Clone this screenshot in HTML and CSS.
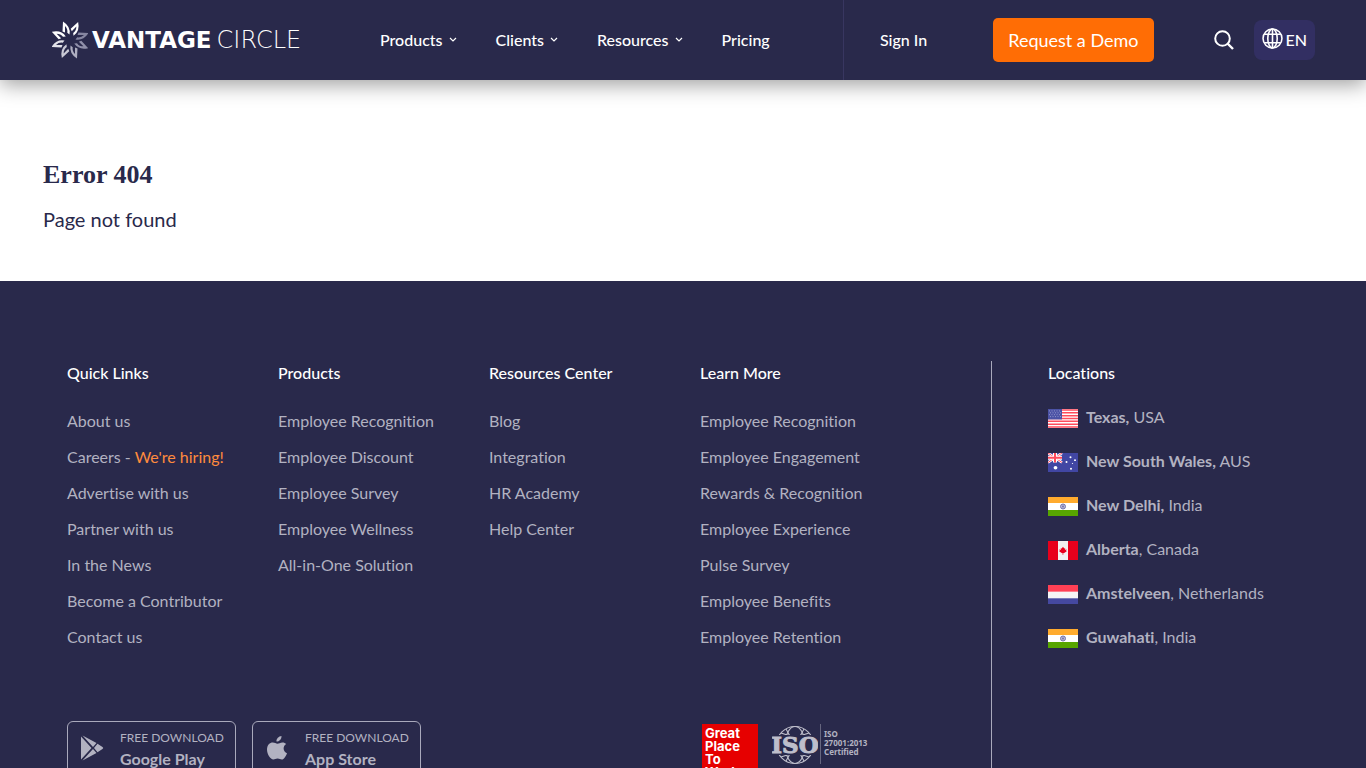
FILE: index.html
```html
<!DOCTYPE html>
<html lang="en">
<head>
<meta charset="utf-8">
<meta name="viewport" content="width=device-width, initial-scale=1">
<title>Error 404 | Vantage Circle</title>
<link rel="stylesheet" href="styles.css">
</head>
<body>
<svg class="sprites" aria-hidden="true">
  <symbol id="chevron" viewBox="0 0 8 6"><path d="M1 1l3 3 3-3" fill="none" stroke="currentColor" stroke-width="1.200"/></symbol>
  <symbol id="india" viewBox="0 0 30 19" preserveAspectRatio="none"><path fill="#fff" d="M0 0h30v19H0z"/><path fill="#ffab2e" d="M0 0h30v6H0z"/><path fill="#57a500" d="M0 13h30v6H0z"/><circle cx="15" cy="9.500" r="2.500" fill="#b9b9d8" stroke="#7474ad"/><circle cx="15" cy="9.500" r="1" fill="#7474ad"/></symbol>
</svg>
<header class="header">
  <a class="logo" href="#" aria-label="Vantage Circle">
    <svg class="logo-mark" viewBox="0 0 36 38">
      <defs>
        <path id="petal" d="M-7.500 -8.500L-7 -18.500Q1 -13.500 -.5 -5.500L-2.700 -7.200Q-2 -11 -5 -14L-5 -7.500Z"/>
      </defs>
      <g transform="translate(18 19)">
        <use href="#petal" fill="#fff"/>
        <use href="#petal" fill="#fff" transform="rotate(45)"/>
        <use href="#petal" fill="#8585a0" transform="rotate(90)"/>
        <use href="#petal" fill="#9090aa" transform="rotate(135)"/>
        <use href="#petal" fill="#aeaec0" transform="rotate(180)"/>
        <use href="#petal" fill="#c9c9d5" transform="rotate(225)"/>
        <use href="#petal" fill="#e2e2e9" transform="rotate(270)"/>
        <use href="#petal" fill="#fff" transform="rotate(315)"/>
      </g>
    </svg>
    <span class="logo-bold">VANTAGE</span><span class="logo-light">CIRCLE</span>
  </a>
  <nav class="nav">
    <a href="#">Products<svg class="chevron"><use href="#chevron"/></svg></a>
    <a href="#">Clients<svg class="chevron"><use href="#chevron"/></svg></a>
    <a href="#">Resources<svg class="chevron"><use href="#chevron"/></svg></a>
    <a href="#">Pricing</a>
  </nav>
  <div class="actions">
    <a class="sign-in" href="#">Sign In</a>
    <a class="demo" href="#">Request a Demo</a>
    <button class="search" type="button" aria-label="Search"><svg viewBox="0 0 20 20"><circle cx="8.500" cy="8.500" r="7.300" fill="none" stroke="currentColor" stroke-width="2"/><path d="M13.500 13.500l5.500 5.500" stroke="currentColor" stroke-width="2.400"/></svg></button>
    <button class="language" type="button"><svg viewBox="0 0 20 20" fill="none" stroke="currentColor" stroke-width="1.500"><circle cx="10" cy="10" r="9"/><ellipse cx="10" cy="10" rx="4.500" ry="9"/><path d="M10 1v18M2 6h16M2 14h16"/></svg>EN</button>
  </div>
</header>
<main class="main">
  <h1>Error 404</h1>
  <p>Page not found</p>
</main>
<footer class="footer">
  <div class="directory">
    <div class="columns">
      <section><h2>Quick Links</h2><ul>
        <li><a href="#">About us</a></li>
        <li><a href="#">Careers - <span class="hiring">We're hiring!</span></a></li>
        <li><a href="#">Advertise with us</a></li>
        <li><a href="#">Partner with us</a></li>
        <li><a href="#">In the News</a></li>
        <li><a href="#">Become a Contributor</a></li>
        <li><a href="#">Contact us</a></li>
      </ul></section>
      <section><h2>Products</h2><ul>
        <li><a href="#">Employee Recognition</a></li>
        <li><a href="#">Employee Discount</a></li>
        <li><a href="#">Employee Survey</a></li>
        <li><a href="#">Employee Wellness</a></li>
        <li><a href="#">All-in-One Solution</a></li>
      </ul></section>
      <section><h2>Resources Center</h2><ul>
        <li><a href="#">Blog</a></li>
        <li><a href="#">Integration</a></li>
        <li><a href="#">HR Academy</a></li>
        <li><a href="#">Help Center</a></li>
      </ul></section>
      <section><h2>Learn More</h2><ul>
        <li><a href="#">Employee Recognition</a></li>
        <li><a href="#">Employee Engagement</a></li>
        <li><a href="#">Rewards &amp; Recognition</a></li>
        <li><a href="#">Employee Experience</a></li>
        <li><a href="#">Pulse Survey</a></li>
        <li><a href="#">Employee Benefits</a></li>
        <li><a href="#">Employee Retention</a></li>
      </ul></section>
    </div>
    <div class="badges">
      <div class="stores">
        <a class="store" href="#">
          <svg viewBox="0 0 24 26" fill="currentColor"><path d="M1 1.500v23L11.500 13zM2.500 .5L16.500 8l-3.500 4zM2.500 25.500L16.500 18 13 14zM17.500 8.800l5 3.200q1.500 1 0 2l-5 3.200L14 13z"/></svg>
          <span class="store-text"><small>FREE DOWNLOAD</small><b>Google Play</b></span>
        </a>
        <a class="store" href="#">
          <svg viewBox="0 0 24 26" fill="currentColor"><path d="M16.500 1c.2 3-2 5.600-5 5.600C11.200 3.800 13.700 1.300 16.500 1zM21.200 9c-4 2.600-3 7.700.8 9.200-.8 2.400-3 6.300-5.200 6.300-1.600 0-2.200-1-4.200-1s-2.700 1-4.200 1C5.300 24.500 2 19 2 14.500 2 10 4.800 7.500 7.800 7.500c1.900 0 3.300 1.200 4.700 1.200 1.300 0 2.700-1.300 5-1.300 1.500 0 2.900.7 3.700 1.600z"/></svg>
          <span class="store-text"><small>FREE DOWNLOAD</small><b>App Store</b></span>
        </a>
      </div>
      <div class="certificates">
        <div class="great-place">Great<br>Place<br>To<br>Work.</div>
        <div class="iso">
          <svg viewBox="0 0 46 42" role="img" aria-label="ISO">
            <g fill="none" stroke="#bebecb" stroke-width="1.100"><circle cx="23" cy="21" r="18.500"/><ellipse cx="23" cy="21" rx="10" ry="18.500"/><path d="M9 9q14 6 28 0M9 33q14-6 28 0M14 5l18 32M32 5L14 37"/></g>
            <path d="M0 11h46v20H0z" fill="#29294b"/>
            <text x="23" y="29" text-anchor="middle" class="iso-name">ISO</text>
          </svg>
          <div class="iso-text">ISO<br>27001:2013<br>Certified</div>
        </div>
      </div>
    </div>
  </div>
  <section class="locations">
    <h2>Locations</h2>
    <ul>
      <li><svg class="flag" viewBox="0 0 30 20" preserveAspectRatio="none"><path fill="#fff" d="M0 0h30v20H0z"/><path stroke="#ff4b5c" stroke-width="1.600" d="M0 1h30M0 4h30M0 7h30M0 10h30M0 13h30M0 16h30M0 19h30"/><path fill="#4b52a5" d="M0 0h14v11H0z"/><path stroke="#8f95cb" stroke-dasharray="1 1.500" d="M1 2h12M2 4h11M1 6h12M2 8h11"/></svg><span><b>Texas,</b> USA</span></li>
      <li><svg class="flag" viewBox="0 0 30 20" preserveAspectRatio="none"><path fill="#4146a3" d="M0 0h30v20H0z"/><path stroke="#fff" stroke-width="2.500" d="M0 0l14 10M14 0L0 10"/><path stroke="#ff4b5c" d="M0 0l14 10M14 0L0 10"/><path stroke="#fff" stroke-width="4" d="M7 0v10M0 5h14"/><path stroke="#ff4b5c" stroke-width="2" d="M7 0v10M0 5h14"/><g fill="#fff"><circle cx="7.500" cy="15.500" r="1.900"/><circle cx="22.500" cy="4.500" r="1"/><circle cx="18.500" cy="9.500" r="1"/><circle cx="27" cy="7.500" r="1"/><circle cx="23" cy="16.500" r="1"/><circle cx="24.500" cy="11" r=".6"/></g></svg><span><b>New South Wales,</b> AUS</span></li>
      <li><svg class="flag"><use href="#india"/></svg><span><b>New Delhi,</b> India</span></li>
      <li><svg class="flag" viewBox="0 0 30 20" preserveAspectRatio="none"><path fill="#f1f1f1" d="M0 0h30v20H0z"/><path fill="#e8001c" d="M0 0h10v20H0zM20 0h10v20H20zM15 6l1.200 2 1-.3-.3 1.800 1.600-.8-.3 1.600.6.400-2.600 2-1 .1v2h-.5v-2l-1-.1-2.600-2 .6-.4-.3-1.600 1.600.8-.3-1.800 1 .3z"/></svg><span><b>Alberta</b>, Canada</span></li>
      <li><svg class="flag" viewBox="0 0 30 20" preserveAspectRatio="none"><path fill="#f5f5f5" d="M0 0h30v20H0z"/><path fill="#ff4055" d="M0 0h30v7H0z"/><path fill="#4548a0" d="M0 14h30v6H0z"/></svg><span><b>Amstelveen</b>, Netherlands</span></li>
      <li><svg class="flag"><use href="#india"/></svg><span><b>Guwahati</b>, India</span></li>
    </ul>
  </section>
</footer>
</body>
</html>
```
FILE: styles.css
```css
* { box-sizing: border-box; }
body { margin: 0; font: 16px/24px Lato, "Open Sans", sans-serif; font-variant-ligatures: none; color: #29294b; background: #fff; }
a { color: inherit; text-decoration: none; }
ul { list-style: none; margin: 0; padding: 0; }
h1, h2, p { margin: 0; }
button { font: inherit; color: inherit; border: 0; background: none; padding: 0; cursor: pointer; }
svg { display: block; flex: none; }
.sprites { position: absolute; width: 0; height: 0; }

.header { position: relative; display: flex; align-items: center; height: 80px; padding: 0 51px 0 52px; background: #29294b; color: #fff; font-weight: 500; box-shadow: 0 4px 20px rgba(0, 0, 0, .4); }
.logo { display: flex; align-items: center; width: 328px; font: 23px/28px "DejaVu Sans", sans-serif; }
.logo-mark { width: 36px; height: 38px; margin-right: 4px; }
.logo-bold { font-weight: 700; }
.logo-light { margin-left: 5px; font-size: 24px; font-weight: 200; }
.nav { display: flex; gap: 39px; flex: 1; }
.nav a { display: flex; align-items: center; gap: 6px; }
.chevron { width: 8px; height: 6px; }
.actions { display: flex; align-items: center; align-self: stretch; padding-left: 36px; border-left: 1px solid #383660; }
.demo { margin-left: 66px; padding: 10px 15px; border-radius: 5px; background: #ff6d05; font-size: 18px; font-weight: 400; }
.search { margin-left: 60px; }
.search svg { width: 20px; height: 20px; }
.language { display: flex; align-items: center; gap: 3px; height: 40px; margin-left: 20px; padding: 0 8px; border-radius: 8px; background: #322f62; }
.language svg { width: 21px; height: 21px; margin-bottom: 4px; }

.main { padding: 79px 43px 48px; }
.main h1 { font: bold 26px/32px "Liberation Serif", serif; }
.main p { margin-top: 14px; font-size: 20px; line-height: 28px; }

.footer { display: flex; padding: 80px 67px; background: #29294b; color: #b2b2c1; }
.directory { flex: 1; }
.columns { display: grid; grid-template-columns: repeat(4, 211px); }
.footer h2 { font-size: 16px; line-height: 24px; font-weight: 500; color: #fff; }
.columns ul { display: grid; gap: 12px; margin-top: 24px; }
.hiring { color: #ff8b3d; }
.badges { display: grid; grid-template-columns: 633px 1fr; margin-top: 72px; }
.stores { display: flex; gap: 16px; align-items: flex-start; }
.store { display: flex; gap: 16px; align-items: center; width: 169px; padding: 5px 12px; border: 1px solid #a9a9bc; border-radius: 6px; }
.store svg { width: 24px; height: 26px; }
.store-text { display: grid; }
.store small { font-size: 12px; line-height: 22px; white-space: nowrap; }
.store b { line-height: 20px; }
.certificates { display: flex; gap: 14px; align-items: flex-start; padding: 3px 2px; }
.great-place { width: 56px; height: 92px; padding: 3px; background: #e60000; color: #fff; font: bold 13px/13px Inter, sans-serif; }
.iso { display: flex; gap: 2px; }
.iso svg { width: 46px; height: 42px; }
.iso-name { font: bold 23px "DejaVu Serif", serif; fill: #bebecb; stroke: #bebecb; stroke-width: 1px; }
.iso-text { height: 40px; padding: 5px 0 0 3px; border-left: 1px solid #66667f; font: bold 8px/9px "Noto Sans", sans-serif; }

.locations { width: 308px; padding-left: 56px; border-left: 1px solid #a9a9bc; }
.locations ul { display: grid; gap: 20px; margin-top: 20px; }
.locations li { display: flex; align-items: center; gap: 8px; white-space: nowrap; }
.flag { width: 30px; height: 19px; margin-top: 3px; }
```
